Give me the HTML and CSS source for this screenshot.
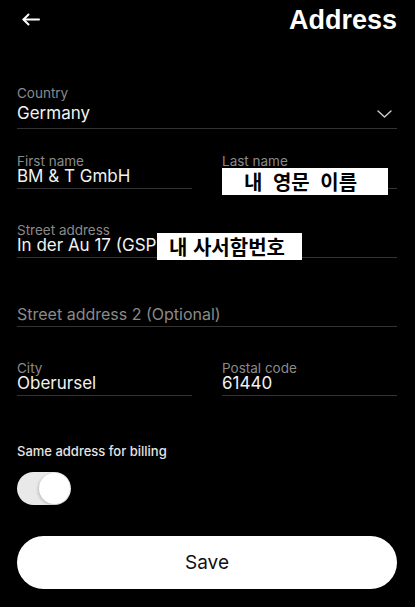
FILE: index.html
```html
<!DOCTYPE html>
<html lang="en">
<head>
    <meta charset="UTF-8">
    <meta name="viewport" content="width=device-width, initial-scale=1.0">
    <title>Address</title>
    <link rel="stylesheet" href="styles.css">
</head>
<body>
    <div class="page">
        <div class="topbar">
            <a class="back" href="#">
                <svg width="18" height="13" viewBox="0 0 18 13" fill="none" stroke="#fff" stroke-width="2" stroke-linecap="round" stroke-linejoin="round">
                    <path d="M17 6.5H1.5"/>
                    <path d="M6.5 1.5L1.5 6.5l5 5"/>
                </svg>
            </a>
            <h1>Address</h1>
        </div>

        <div class="field country">
            <div class="label">Country</div>
            <div class="select">
                <span class="value">Germany</span>
                <svg width="15" height="8" viewBox="0 0 15 8" fill="none" stroke="#cfcfcf" stroke-width="1.4" stroke-linecap="round" stroke-linejoin="round">
                    <path d="M1 1l6.5 6L14 1"/>
                </svg>
            </div>
        </div>

        <div class="row">
            <div class="field">
                <div class="label">First name</div>
                <div class="value">BM &amp; T GmbH</div>
            </div>
            <div class="field">
                <div class="label">Last name</div>
                <div class="value">&nbsp;</div>
                <div class="mask mask-name">내 영문 이름</div>
            </div>
        </div>

        <div class="row">
            <div class="field">
                <div class="label">Street address</div>
                <div class="value">In der Au 17 (GSP:</div>
                <div class="mask mask-box">내 사서함번호</div>
            </div>
        </div>

        <div class="row">
            <div class="field">
                <div class="label">&nbsp;</div>
                <div class="value placeholder">Street address 2 (Optional)</div>
            </div>
        </div>

        <div class="row">
            <div class="field">
                <div class="label">City</div>
                <div class="value">Oberursel</div>
            </div>
            <div class="field">
                <div class="label">Postal code</div>
                <div class="value">61440</div>
            </div>
        </div>

        <div class="billing">Same address for billing</div>
        <div class="toggle"><span class="knob"></span></div>

        <button class="save">Save</button>
    </div>
</body>
</html>
```

FILE: styles.css
```css
body {
    margin: 0;
    background: #000;
    font-family: 'Inter', 'Noto Sans', sans-serif;
    color: #f2f2f2;
}
.page {
    padding: 5px 18px 0 17px;
    display: flex;
    flex-direction: column;
}
.topbar {
    height: 31px;
    display: flex;
    justify-content: space-between;
    align-items: center;
}
.back {
    display: flex;
    margin-left: 5px;
    margin-top: -3px;
}
h1 {
    margin: 0;
    font-family: 'Liberation Sans', Arial, sans-serif;
    font-weight: 700;
    font-size: 27px;
    line-height: 31px;
    color: #fff;
}
.field {
    position: relative;
    border-bottom: 1px solid #333;
    padding-bottom: 3px;
}
.label {
    font-size: 13.5px;
    line-height: 14px;
    color: #8a8a8a;
}
.value {
    font-size: 17px;
    line-height: 17px;
    color: #f2f2f2;
    white-space: nowrap;
}
.value.placeholder {
    font-size: 16px;
    color: #8a8a8a;
}
.country {
    margin-top: 50px;
    padding-bottom: 1px;
}
.select {
    height: 27px;
    display: flex;
    justify-content: space-between;
    align-items: center;
    padding-right: 5px;
}
.row {
    display: grid;
    grid-template-columns: 1fr 1fr;
    column-gap: 30px;
    margin-top: 34px;
}
.row .field:only-child {
    grid-column: 1 / 3;
}
.country + .row {
    margin-top: 25px;
}
.mask {
    position: absolute;
    background: #fff;
    color: #000;
    font-family: 'Noto Sans CJK KR', sans-serif;
    font-weight: 700;
    font-size: 20px;
    line-height: 27px;
    height: 27px;
    white-space: nowrap;
    box-sizing: border-box;
}
.mask-name {
    left: 0;
    top: 14px;
    width: 166px;
    padding-left: 22px;
    word-spacing: 6px;
}
.mask-box {
    left: 140px;
    top: 10px;
    width: 145px;
    padding-left: 12px;
    word-spacing: 1px;
}
.billing {
    margin-top: 47px;
    font-size: 13px;
    line-height: 16px;
    font-weight: 500;
    color: #e4e4e4;
}
.toggle {
    margin-top: 13px;
    width: 54px;
    height: 33px;
    border-radius: 17px;
    background: #e9e9e9;
    display: flex;
    justify-content: flex-end;
    align-items: center;
    padding: 0 1px;
    box-sizing: border-box;
}
.knob {
    width: 31px;
    height: 31px;
    border-radius: 50%;
    background: #fff;
    box-shadow: -1px 1px 3px rgba(0,0,0,0.2);
}
.save {
    margin-top: 31px;
    height: 53px;
    width: 100%;
    border: none;
    border-radius: 27px;
    background: #fff;
    color: #111;
    font-family: 'Inter', sans-serif;
    font-size: 19px;
    cursor: pointer;
}
```
